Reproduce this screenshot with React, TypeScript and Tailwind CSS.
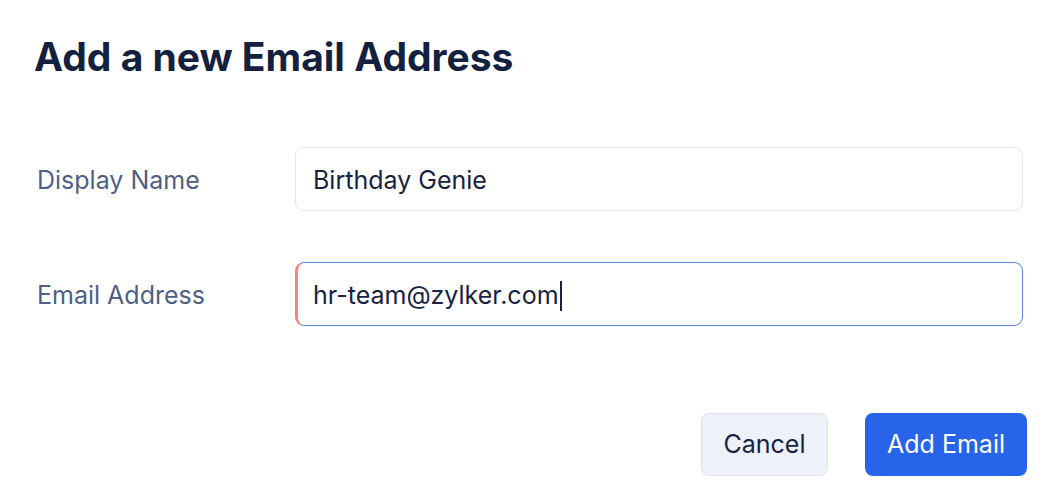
import React from "react";

export default function App() {
  return (
    <div className="w-[1060px] h-[490px] bg-white font-['Inter',sans-serif] relative overflow-hidden">
      <h1 className="pl-[34px] pt-[33px] text-[39px] leading-[48px] font-bold text-[#13213f]">
        Add a new Email Address
      </h1>
      <div className="mt-[66px] pl-[37px] pr-[37px] flex flex-col gap-[51px]">
        <div className="flex items-center h-[64px]">
          <label className="w-[258px] pt-[3px] text-[25px] text-[#4f5f85]">Display Name</label>
          <div className="flex-1 h-[64px] rounded-[9px] border border-[#e3e6ee] flex items-center pt-[3px] pl-[17px] text-[25px] text-[#17233f]">
            Birthday Genie
          </div>
        </div>
        <div className="flex items-center h-[64px]">
          <label className="w-[258px] pt-[3px] text-[25px] text-[#4f5f85]">Email Address</label>
          <div className="flex-1 h-[64px] rounded-[9px] border border-[#5b85d6] border-l-[3px] border-l-[#f0867f] flex items-center pt-[3px] pl-[15px] text-[25px] text-[#17233f]">
            hr-team@zylker.com
            <span className="inline-block w-[2px] h-[30px] bg-[#17233f] ml-[1px]" />
          </div>
        </div>
      </div>
      <div className="mt-[87px] pr-[33px] flex justify-end gap-[37px]">
        <button className="w-[127px] h-[63px] rounded-[8px] bg-[#eef1fa] border border-[#dde2ef] text-[25px] text-[#17233f]">
          Cancel
        </button>
        <button className="w-[162px] h-[63px] rounded-[8px] bg-[#2864ea] text-[25px] text-white">
          Add Email
        </button>
      </div>
    </div>
  );
}
